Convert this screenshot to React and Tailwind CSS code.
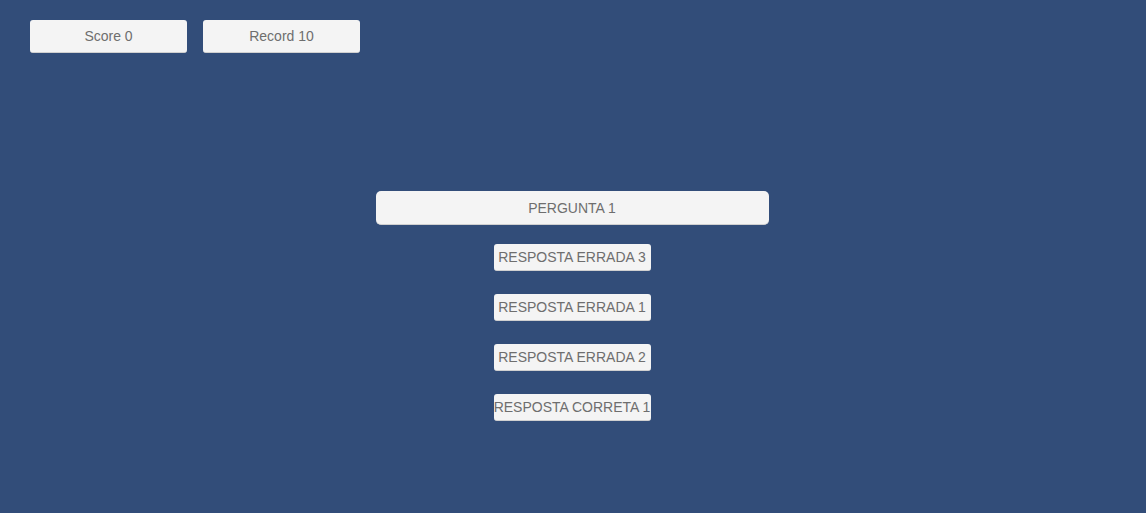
import React from 'react';

const answers = ["RESPOSTA ERRADA 3", "RESPOSTA ERRADA 1", "RESPOSTA ERRADA 2", "RESPOSTA CORRETA 1"];

export default function App() {
    return (
        <div className="w-[1146px] h-[513px] bg-[#324d79] overflow-hidden font-['Liberation_Sans',Arial,sans-serif] text-[#6e6e6e]">
            {/* Placar */}
            <div className="flex gap-[16px] pl-[30px] pt-[20px]">
                <div className="w-[157px] h-[33px] pt-[1px] bg-[#f4f4f4] rounded-[3px] border-b border-[#d0d0d0] flex items-center justify-center text-[14px]">Score 0</div>
                <div className="w-[157px] h-[33px] pt-[1px] bg-[#f4f4f4] rounded-[3px] border-b border-[#d0d0d0] flex items-center justify-center text-[14px]">Record 10</div>
            </div>

            {/* Pergunta e respostas */}
            <div className="flex flex-col items-center mt-[138px] pr-[2px]">
                <div className="w-[393px] h-[34px] pt-[1px] bg-[#f4f4f4] rounded-[5px] border-b border-[#d0d0d0] flex items-center justify-center text-[14px]">PERGUNTA 1</div>
                <div className="flex flex-col gap-[23px] mt-[19px]">
                    {answers.map(a => (
                        <div key={a} className="w-[157px] h-[27px] pt-[1px] bg-[#f4f4f4] rounded-[3px] border-b border-[#d0d0d0] flex items-center justify-center text-[14px] whitespace-nowrap overflow-visible">
                            {a}
                        </div>
                    ))}
                </div>
            </div>
        </div>
    );
}
